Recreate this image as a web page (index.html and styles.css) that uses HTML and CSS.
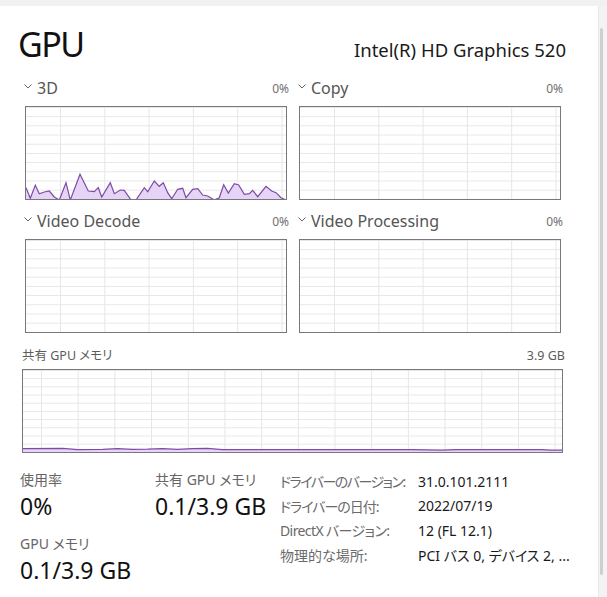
FILE: index.html
```html
<!DOCTYPE html>
<html lang="ja">
  <head>
    <meta charset="UTF-8" />
    <meta name="viewport" content="width=device-width, initial-scale=1.0" />
    <title>GPU</title>
    <link rel="stylesheet" href="styles.css">
  </head>
  <body>
    <div class="topbar"></div>
    <div class="window">
      <main class="panel">
        <div class="title-row">
          <h1>GPU</h1>
          <div class="adapter">Intel(R) HD Graphics 520</div>
        </div>

        <div class="charts">
          <div class="chart">
            <div class="chart-head">
              <span class="chev"><svg width="8" height="5" viewBox="0 0 8 5"><path d="M0.5 0.5 L4 4 L7.5 0.5" fill="none" stroke="#666" stroke-width="1"/></svg></span>
              <span class="chart-name">3D</span>
              <span class="chart-pct">0%</span>
            </div>
            <div class="plot">
              <svg viewBox="0 0 260 92" preserveAspectRatio="none">
                <polygon class="area" points="0,80.7 4.3,91.3 9.3,78.3 13.3,86.7 18.3,85 23.3,84 28.3,90 33.3,93 40,75.7 44.3,93 54,67.3 62.3,84 68.3,84.7 72.3,80.7 75.7,90 84.3,75.7 88.3,86.7 94.3,83 98.3,83.3 105,93 110,93 118.3,80.7 121.7,84.7 128.3,74 133.3,79.3 137.3,75.7 141.7,85.7 145.7,91.7 151.7,82.3 156.7,81.3 160,90.7 166.7,82.3 171.7,81.7 176.7,88 181.7,89 188.3,93 193.3,90.7 197.7,77.7 202.3,86 208.3,76.7 212.7,78 218.3,87.3 223.3,86.7 226.7,83.3 231.7,89.7 240,79.3 245.7,84 250,85.7 255,90.7 260,93 260,93 0,93"/>
                <polyline class="line" points="0,80.7 4.3,91.3 9.3,78.3 13.3,86.7 18.3,85 23.3,84 28.3,90 33.3,93 40,75.7 44.3,93 54,67.3 62.3,84 68.3,84.7 72.3,80.7 75.7,90 84.3,75.7 88.3,86.7 94.3,83 98.3,83.3 105,93 110,93 118.3,80.7 121.7,84.7 128.3,74 133.3,79.3 137.3,75.7 141.7,85.7 145.7,91.7 151.7,82.3 156.7,81.3 160,90.7 166.7,82.3 171.7,81.7 176.7,88 181.7,89 188.3,93 193.3,90.7 197.7,77.7 202.3,86 208.3,76.7 212.7,78 218.3,87.3 223.3,86.7 226.7,83.3 231.7,89.7 240,79.3 245.7,84 250,85.7 255,90.7 260,93"/>
              </svg>
            </div>
          </div>

          <div class="chart">
            <div class="chart-head">
              <span class="chev"><svg width="8" height="5" viewBox="0 0 8 5"><path d="M0.5 0.5 L4 4 L7.5 0.5" fill="none" stroke="#666" stroke-width="1"/></svg></span>
              <span class="chart-name">Copy</span>
              <span class="chart-pct">0%</span>
            </div>
            <div class="plot"></div>
          </div>

          <div class="chart">
            <div class="chart-head">
              <span class="chev"><svg width="8" height="5" viewBox="0 0 8 5"><path d="M0.5 0.5 L4 4 L7.5 0.5" fill="none" stroke="#666" stroke-width="1"/></svg></span>
              <span class="chart-name">Video Decode</span>
              <span class="chart-pct">0%</span>
            </div>
            <div class="plot"></div>
          </div>

          <div class="chart">
            <div class="chart-head">
              <span class="chev"><svg width="8" height="5" viewBox="0 0 8 5"><path d="M0.5 0.5 L4 4 L7.5 0.5" fill="none" stroke="#666" stroke-width="1"/></svg></span>
              <span class="chart-name">Video Processing</span>
              <span class="chart-pct">0%</span>
            </div>
            <div class="plot"></div>
          </div>
        </div>

        <div class="memory">
          <div class="memory-head">
            <span>共有 GPU メモリ</span>
            <span>3.9 GB</span>
          </div>
          <div class="plot plot-wide">
            <svg viewBox="0 0 541 82" preserveAspectRatio="none">
              <polygon class="area" points="0,78.6 40,78.4 55,79.6 80,79.4 95,78.6 110,79.4 125,79.2 140,78.6 155,79.4 170,78.6 185,78.4 200,79.6 260,79.6 320,79.6 390,79.6 420,80.2 435,79.6 500,79.6 520,79.6 530,80.2 541,80.2 541,82 0,82"/>
              <polyline class="line" points="0,78.6 40,78.4 55,79.6 80,79.4 95,78.6 110,79.4 125,79.2 140,78.6 155,79.4 170,78.6 185,78.4 200,79.6 260,79.6 320,79.6 390,79.6 420,80.2 435,79.6 500,79.6 520,79.6 530,80.2 541,80.2"/>
            </svg>
          </div>
        </div>

        <div class="stats">
          <div class="stat-col">
            <div class="stat-label">使用率</div>
            <div class="stat-value">0%</div>
            <div class="stat-label second">GPU メモリ</div>
            <div class="stat-value">0.1/3.9 GB</div>
          </div>
          <div class="stat-col mid">
            <div class="stat-label">共有 GPU メモリ</div>
            <div class="stat-value">0.1/3.9 GB</div>
          </div>
          <div class="info">
            <div class="info-key narrow">ドライバーのバージョン:</div>
            <div class="info-val">31.0.101.2111</div>
            <div class="info-key narrow-sm">ドライバーの日付:</div>
            <div class="info-val">2022/07/19</div>
            <div class="info-key narrow-xs">DirectX バージョン:</div>
            <div class="info-val">12 (FL 12.1)</div>
            <div class="info-key">物理的な場所:</div>
            <div class="info-val">PCI バス 0, デバイス 2, ...</div>
          </div>
        </div>
      </main>
      <div class="scrollbar"><div class="thumb"></div></div>
    </div>
  </body>
</html>
```

FILE: styles.css
```css
body {
  margin: 0;
  background-color: #ffffff;
  font-family: "Noto Sans", "Noto Sans CJK JP", sans-serif;
  color: #1a1a1a;
  font-feature-settings: "palt";
}

.topbar {
  height: 6px;
  background-color: #f1f1f1;
}

.window {
  display: flex;
  height: 591px;
}

.panel {
  width: 598px;
  flex-shrink: 0;
}

.scrollbar {
  flex-grow: 1;
  background-color: #f3f3f3;
  border-left: 1px solid #e8e8e8;
  padding-top: 22px;
}

.thumb {
  width: 3px;
  height: 547px;
  margin-left: 1px;
  background-color: #cfcfcf;
  border-radius: 2px;
}

/* titel */
.title-row {
  display: flex;
  justify-content: space-between;
  align-items: baseline;
  padding: 18px 32px 0 18px;
  height: 40px;
}

h1 {
  margin: 0;
  font-size: 34px;
  font-weight: normal;
  letter-spacing: -1.5px;
  line-height: 40px;
  color: #111;
}

.adapter {
  font-size: 18.5px;
  color: #1a1a1a;
}

/* grafik */
.charts {
  display: grid;
  grid-template-columns: 265px 265px;
  column-gap: 9px;
  row-gap: 9px;
  margin: 12px 0 0 24px;
}

.chart-head {
  display: flex;
  align-items: flex-start;
  height: 30px;
  line-height: 24px;
}

.chev {
  width: 13px;
  padding-top: 7px;
  line-height: 0;
}

.chart-name {
  flex-grow: 1;
  font-size: 16px;
  color: #555;
}

.chart-pct {
  font-size: 12px;
  color: #707070;
  padding-top: 1px;
}

.plot {
  margin-left: 1px;
  width: 260px;
  height: 92px;
  border: 1px solid #7b7580;
  background-color: #fff;
  background-image:
    linear-gradient(#e6e6e6 1px, transparent 1px),
    linear-gradient(90deg, #e6e6e6 1px, transparent 1px);
  background-size: 100% 9.2px, 44.3px 100%;
  background-position: 0 0, 34px 0;
}

.plot svg {
  display: block;
  width: 100%;
  height: 100%;
}

.area {
  fill: #e6d4f6;
  stroke: none;
}

.line {
  fill: none;
  stroke: #7e4aa7;
  stroke-width: 1.2;
  vector-effect: non-scaling-stroke;
}

/* memori */
.memory {
  margin: 9px 0 0 20px;
  width: 545px;
}

.memory-head {
  display: flex;
  justify-content: space-between;
  height: 27px;
  padding: 3px 0 0 2px;
  box-sizing: border-box;
  line-height: 22px;
  font-size: 12.5px;
  color: #5c5c5c;
}

.plot-wide {
  margin-left: 2px;
  width: 539px;
  height: 82px;
  background-size: 100% 8.2px, 36.7px 100%;
  background-position: 0 0, 18px 0;
}

/* statistik */
.stats {
  display: flex;
  margin: 17px 0 0 20px;
}

.stat-col {
  width: 135px;
}

.stat-col.mid {
  width: 125px;
}

.stat-label {
  font-size: 14px;
  line-height: 20px;
  color: #666;
}

.stat-label.second {
  margin-top: 12px;
}

.stat-value {
  font-size: 23px;
  line-height: 32px;
  color: #111;
}

.info {
  display: grid;
  grid-template-columns: 138px auto;
  grid-auto-rows: 24.5px;
  align-items: center;
  margin-top: -1px;
}

.info-key {
  font-size: 14px;
  color: #6a6a6a;
  white-space: nowrap;
}

.info-key.narrow {
  letter-spacing: -1.5px;
}

.info-key.narrow-sm {
  letter-spacing: -1px;
}

.info-key.narrow-xs {
  letter-spacing: -0.6px;
}

.info-val {
  font-size: 14px;
  color: #1a1a1a;
  white-space: nowrap;
}
```
